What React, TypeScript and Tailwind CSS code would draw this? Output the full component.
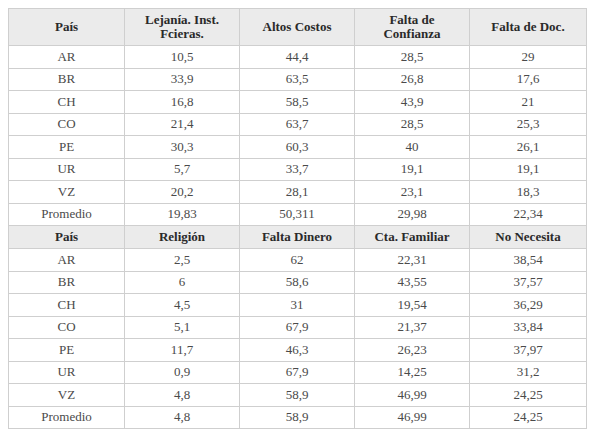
const head1 = ['País', 'Lejanía. Inst.\nFcieras.', 'Altos Costos', 'Falta de\nConfianza', 'Falta de Doc.']
const head2 = ['País', 'Religión', 'Falta Dinero', 'Cta. Familiar', 'No Necesita']

const rows1 = [
  ['AR', '10,5', '44,4', '28,5', '29'],
  ['BR', '33,9', '63,5', '26,8', '17,6'],
  ['CH', '16,8', '58,5', '43,9', '21'],
  ['CO', '21,4', '63,7', '28,5', '25,3'],
  ['PE', '30,3', '60,3', '40', '26,1'],
  ['UR', '5,7', '33,7', '19,1', '19,1'],
  ['VZ', '20,2', '28,1', '23,1', '18,3'],
  ['Promedio', '19,83', '50,311', '29,98', '22,34'],
]

const rows2 = [
  ['AR', '2,5', '62', '22,31', '38,54'],
  ['BR', '6', '58,6', '43,55', '37,57'],
  ['CH', '4,5', '31', '19,54', '36,29'],
  ['CO', '5,1', '67,9', '21,37', '33,84'],
  ['PE', '11,7', '46,3', '26,23', '37,97'],
  ['UR', '0,9', '67,9', '14,25', '31,2'],
  ['VZ', '4,8', '58,9', '46,99', '24,25'],
  ['Promedio', '4,8', '58,9', '46,99', '24,25'],
]

function HeadRow({ cells, tall }: { cells: string[]; tall?: boolean }) {
  return (
    <tr className={tall ? 'h-[37px]' : 'h-[23px]'}>
      {cells.map((c, i) => (
        <th
          key={i}
          className="border border-[#cfcfcf] bg-[#ebebeb] p-0 text-center align-middle text-[13px] font-bold leading-[14px] text-[#2a2a2a] whitespace-pre-line"
        >
          {c}
        </th>
      ))}
    </tr>
  )
}

function DataRow({ cells }: { cells: string[] }) {
  return (
    <tr className="h-[22.5px]">
      {cells.map((c, i) => (
        <td key={i} className="border border-[#cfcfcf] p-0 text-center align-middle text-[13px] leading-[14px] text-[#4a4a4a]">
          {c}
        </td>
      ))}
    </tr>
  )
}

export default function App() {
  return (
    <div className="w-[592px] h-[434px] bg-white pl-[8px] pt-[8px] font-['Liberation_Serif',serif]">
      <table className="w-[578px] table-fixed border-collapse">
        <colgroup>
          <col className="w-[116px]" />
          <col className="w-[115px]" />
          <col className="w-[115px]" />
          <col className="w-[115px]" />
          <col className="w-[117px]" />
        </colgroup>
        <tbody>
          <HeadRow cells={head1} tall />
          {rows1.map((r, i) => (
            <DataRow key={'a' + i} cells={r} />
          ))}
          <HeadRow cells={head2} />
          {rows2.map((r, i) => (
            <DataRow key={'b' + i} cells={r} />
          ))}
        </tbody>
      </table>
    </div>
  )
}
